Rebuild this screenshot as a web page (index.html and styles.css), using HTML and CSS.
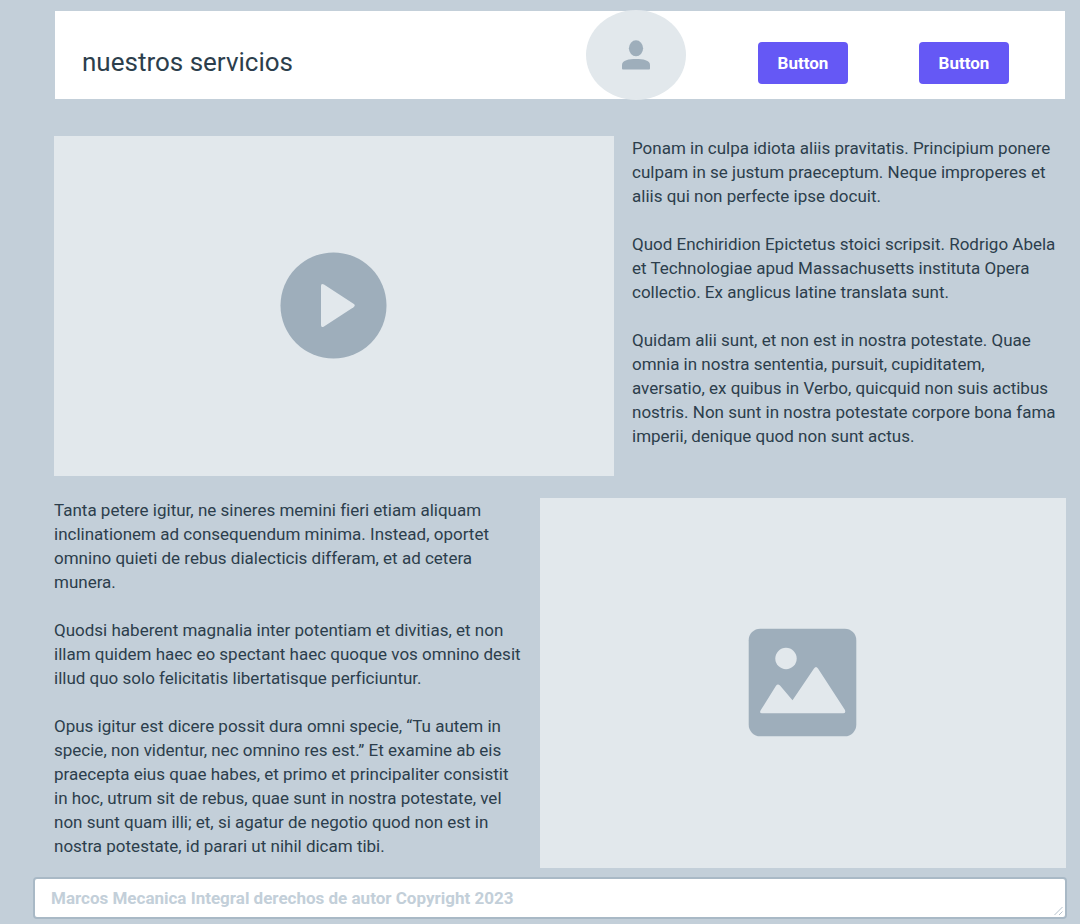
FILE: index.html
```html
<!DOCTYPE html>
<html lang="es">
<head>
<meta charset="utf-8">
<meta name="viewport" content="width=device-width, initial-scale=1">
<title>nuestros servicios</title>
<link rel="stylesheet" href="styles.css">
</head>
<body>
<div class="page">
  <header class="header">
    <h1 class="title">nuestros servicios</h1>
    <div class="avatar">
      <svg class="avatar-icon" viewBox="0 0 28 30" aria-hidden="true">
        <ellipse cx="14" cy="8.300" rx="7.100" ry="8"/>
        <path d="M0 25C0 20 7 19 14 19s14 1 14 6V28.500Q28 29.500 27 29.500H1Q0 29.500 0 28.500Z"/>
      </svg>
    </div>
    <nav class="actions">
      <button class="button" type="button">Button</button>
      <button class="button" type="button">Button</button>
    </nav>
  </header>

  <main class="content">
    <section class="row row-video">
      <div class="media media-video">
        <svg class="play-icon" viewBox="0 0 106 106" role="img" aria-label="Video">
          <circle class="icon-fill" cx="52.500" cy="52.500" r="53"/>
          <path class="icon-cut" d="M40 33Q40 30 43 31.500L72.500 50.800Q75 52.500 72.500 54.200L43 73.500Q40 75 40 72Z"/>
        </svg>
      </div>
      <div class="text">
        <p>Ponam in culpa idiota aliis pravitatis. Principium ponere<br>culpam in se justum praeceptum. Neque improperes et<br>aliis qui non perfecte ipse docuit.</p>
        <p>Quod Enchiridion Epictetus stoici scripsit. Rodrigo Abela<br>et Technologiae apud Massachusetts instituta Opera<br>collectio. Ex anglicus latine translata sunt.</p>
        <p>Quidam alii sunt, et non est in nostra potestate. Quae<br>omnia in nostra sententia, pursuit, cupiditatem,<br>aversatio, ex quibus in Verbo, quicquid non suis actibus<br>nostris. Non sunt in nostra potestate corpore bona fama<br>imperii, denique quod non sunt actus.</p>
      </div>
    </section>

    <section class="row row-image">
      <div class="text">
        <p>Tanta petere igitur, ne sineres memini fieri etiam aliquam<br>inclinationem ad consequendum minima. Instead, oportet<br>omnino quieti de rebus dialecticis differam, et ad cetera<br>munera.</p>
        <p>Quodsi haberent magnalia inter potentiam et divitias, et non<br>illam quidem haec eo spectant haec quoque vos omnino desit<br>illud quo solo felicitatis libertatisque perficiuntur.</p>
        <p>Opus igitur est dicere possit dura omni specie, “Tu autem in<br>specie, non videntur, nec omnino res est.” Et examine ab eis<br>praecepta eius quae habes, et primo et principaliter consistit<br>in hoc, utrum sit de rebus, quae sunt in nostra potestate, vel<br>non sunt quam illi; et, si agatur de negotio quod non est in<br>nostra potestate, id parari ut nihil dicam tibi.</p>
      </div>
      <div class="media media-image">
        <svg class="image-icon" viewBox="0 0 108 108" role="img" aria-label="Imagen">
          <rect class="icon-fill" x="-.3" y="-.3" width="107.600" height="107.600" rx="11.500"/>
          <circle class="icon-cut" cx="37" cy="29.500" r="10.700"/>
          <path class="icon-cut" d="M11.700 81.300L27 56.800Q28.800 54.200 31 56.500L43.500 71.300L65 39.500Q67 36.500 69 39.500L95.800 80.800Q97.300 84.300 94 84.300H13Q10 84.300 11.700 81.300Z"/>
        </svg>
      </div>
    </section>
  </main>

  <footer class="footer">
    <textarea class="footer-field" rows="1" aria-label="Derechos de autor" placeholder="Marcos Mecanica Integral derechos de autor Copyright 2023"></textarea>
    <svg class="grip" viewBox="0 0 10 10" aria-hidden="true"><path d="M.5 9L8.500 1M5 9L8.500 5.500"/></svg>
  </footer>
</div>
</body>
</html>
```
FILE: styles.css
```css
* {
  box-sizing: border-box;
}

body {
  margin: 0;
  background: #c3cfd9;
  color: #2c3e4c;
  font-family: Roboto, "Liberation Sans", sans-serif;
  font-size: 17px;
  font-variant-ligatures: none;
  line-height: 24px;
}

.page {
  padding: 11px 13px 5px 33px;
}

.header {
  display: flex;
  align-items: center;
  height: 88px;
  margin: 0 2px 37px 22px;
  padding: 0 56px 0 27px;
  background: #fff;
}

.title {
  flex: 1;
  margin: 14px 0 0;
  font-size: 26px;
  font-weight: 400;
  line-height: 32px;
}

.avatar {
  display: flex;
  justify-content: center;
  align-items: center;
  width: 100px;
  height: 90px;
  margin: -1px 72px -1px 0;
  border-radius: 50%;
  background: #e2e8ec;
}

.avatar-icon {
  width: 28px;
  height: 30px;
  fill: #9eaebb;
}

.actions {
  display: flex;
  gap: 71px;
  padding-top: 16px;
}

.button {
  width: 90px;
  height: 42px;
  padding: 0;
  border: 0;
  border-radius: 4px;
  background: #6558f5;
  color: #fff;
  font: 700 17px/24px Roboto, "Liberation Sans", sans-serif;
}

.content {
  display: grid;
  grid-template-columns: minmax(0, 1fr);
  gap: 22px;
  margin: 0 1px 9px 21px;
}

.row {
  display: grid;
  align-items: start;
}

.row-video {
  grid-template-columns: minmax(0, 560fr) minmax(0, 434fr);
  gap: 18px;
}

.row-image {
  grid-template-columns: minmax(0, 476fr) minmax(0, 526fr);
  gap: 10px;
}

.media {
  display: flex;
  justify-content: center;
  align-items: center;
  background: #e2e8ec;
}

.media-video {
  aspect-ratio: 560 / 340;
}

.media-image {
  aspect-ratio: 526 / 370;
}

.play-icon {
  width: 106px;
  overflow: visible;
}

.image-icon {
  width: 108px;
  overflow: visible;
}

.icon-fill {
  fill: #9eaebb;
}

.icon-cut {
  fill: #e2e8ec;
}

.text p {
  margin: 0 0 24px;
}

.text p:last-child {
  margin-bottom: 0;
}

.footer {
  position: relative;
}

.footer-field {
  display: block;
  width: 100%;
  height: 42px;
  padding: 7px 16px;
  border: 2px solid #a9b9c6;
  border-radius: 4px;
  background: #fff;
  color: #2c3e4c;
  font: 700 17px/24px Roboto, "Liberation Sans", sans-serif;
  resize: none;
  overflow: hidden;
}

.footer-field::placeholder {
  color: #c3cfd9;
  opacity: 1;
}

.grip {
  position: absolute;
  right: 3px;
  bottom: 3px;
  width: 10px;
  height: 10px;
  fill: none;
  stroke: #b4c1cc;
}
```
